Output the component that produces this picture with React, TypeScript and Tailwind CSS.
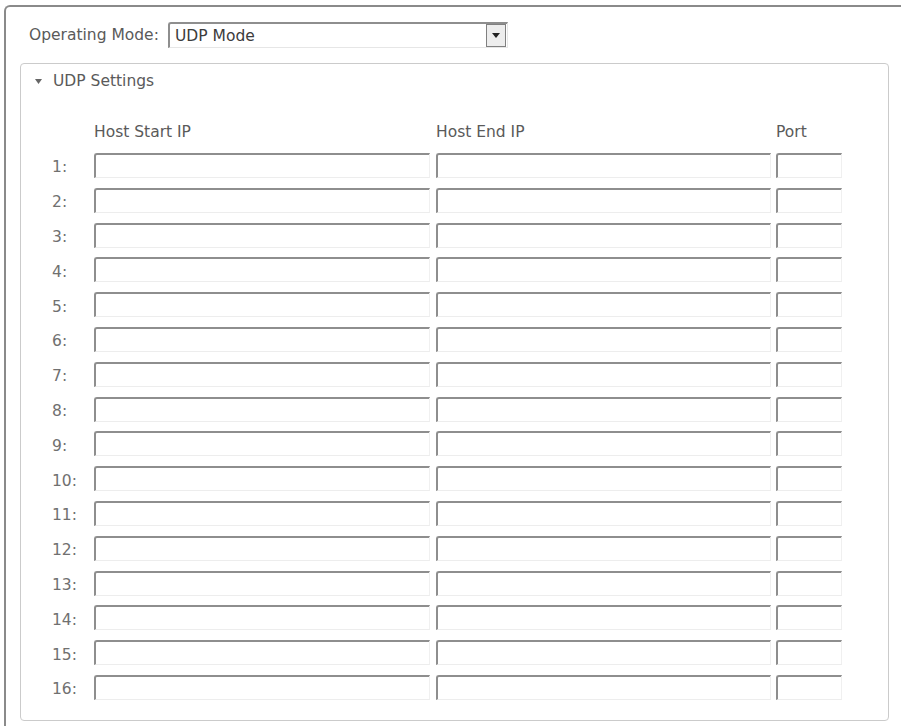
import React from "react";

const rows = Array.from({ length: 16 }, (_, i) => i + 1);

function Field({ width }: { width: string }) {
  return (
    <div
      className={`${width} h-[25px] shrink-0 bg-white rounded-tl-[3px] border-t-2 border-l-2 border-t-[#8e8e8e] border-l-[#8e8e8e] border-r border-b border-r-[#f0f0f0] border-b-[#ededed]`}
    />
  );
}

export default function App() {
  return (
    <div
      className="w-[901px] h-[726px] overflow-hidden bg-white text-[#5a5a5a] text-[15.5px]"
      style={{ fontFamily: '"DejaVu Sans", Verdana, sans-serif' }}
    >
      <div className="ml-[4px] mt-[5px] w-[1000px] h-[800px] border-l-2 border-t-2 border-[#8a8a8a] rounded-tl-[6px]">
        {/* mode selector */}
        <div className="flex items-center pt-[15px] pl-[23px]">
          <span className="w-[139px] shrink-0 leading-[26px]">Operating Mode:</span>
          <div className="w-[340px] h-[26px] flex items-center rounded-tl-[3px] border-t-2 border-l-2 border-t-[#8e8e8e] border-l-[#8e8e8e] border-r border-b border-r-[#e6e6e6] border-b-[#e6e6e6]">
            <span className="flex-1 pl-[5px] text-[#3c3c3c] leading-[22px]">UDP Mode</span>
            <div className="w-[20px] h-[23px] mr-[1px] mt-[-1px] flex items-center justify-center border border-[#808080] bg-[#ededed]">
              <svg width="8" height="5" viewBox="0 0 8 5">
                <path d="M0 0 L8 0 L4 5 Z" fill="#222" />
              </svg>
            </div>
          </div>
        </div>

        {/* UDP settings panel */}
        <div className="ml-[14px] mt-[15px] w-[869px] h-[658px] border border-[#cbcbcb] rounded-[4px]">
          <div className="flex items-center pl-[14px] pt-[7px] h-[27px]">
            <svg width="7" height="5" viewBox="0 0 7 5" className="mt-[1px]">
              <path d="M0 0 L7 0 L3.5 5 Z" fill="#666" />
            </svg>
            <span className="ml-[11px] leading-[20px]">UDP Settings</span>
          </div>

          <div className="pl-[31px] mt-[32px]">
            <div className="flex h-[20px] items-center">
              <div className="w-[42px] shrink-0" />
              <div className="w-[342px] shrink-0">Host Start IP</div>
              <div className="w-[340px] shrink-0">Host End IP</div>
              <div className="w-[66px] shrink-0">Port</div>
            </div>
            <div className="mt-[10px] flex flex-col gap-[9.8px]">
              {rows.map((n) => (
                <div key={n} className="flex items-center h-[25px]">
                  <div className="w-[42px] shrink-0 pt-[5px] text-[#707070]">{n}:</div>
                  <Field width="w-[336px]" />
                  <div className="w-[6px] shrink-0" />
                  <Field width="w-[335px]" />
                  <div className="w-[5px] shrink-0" />
                  <Field width="w-[66px]" />
                </div>
              ))}
            </div>
          </div>
        </div>
      </div>
    </div>
  );
}
